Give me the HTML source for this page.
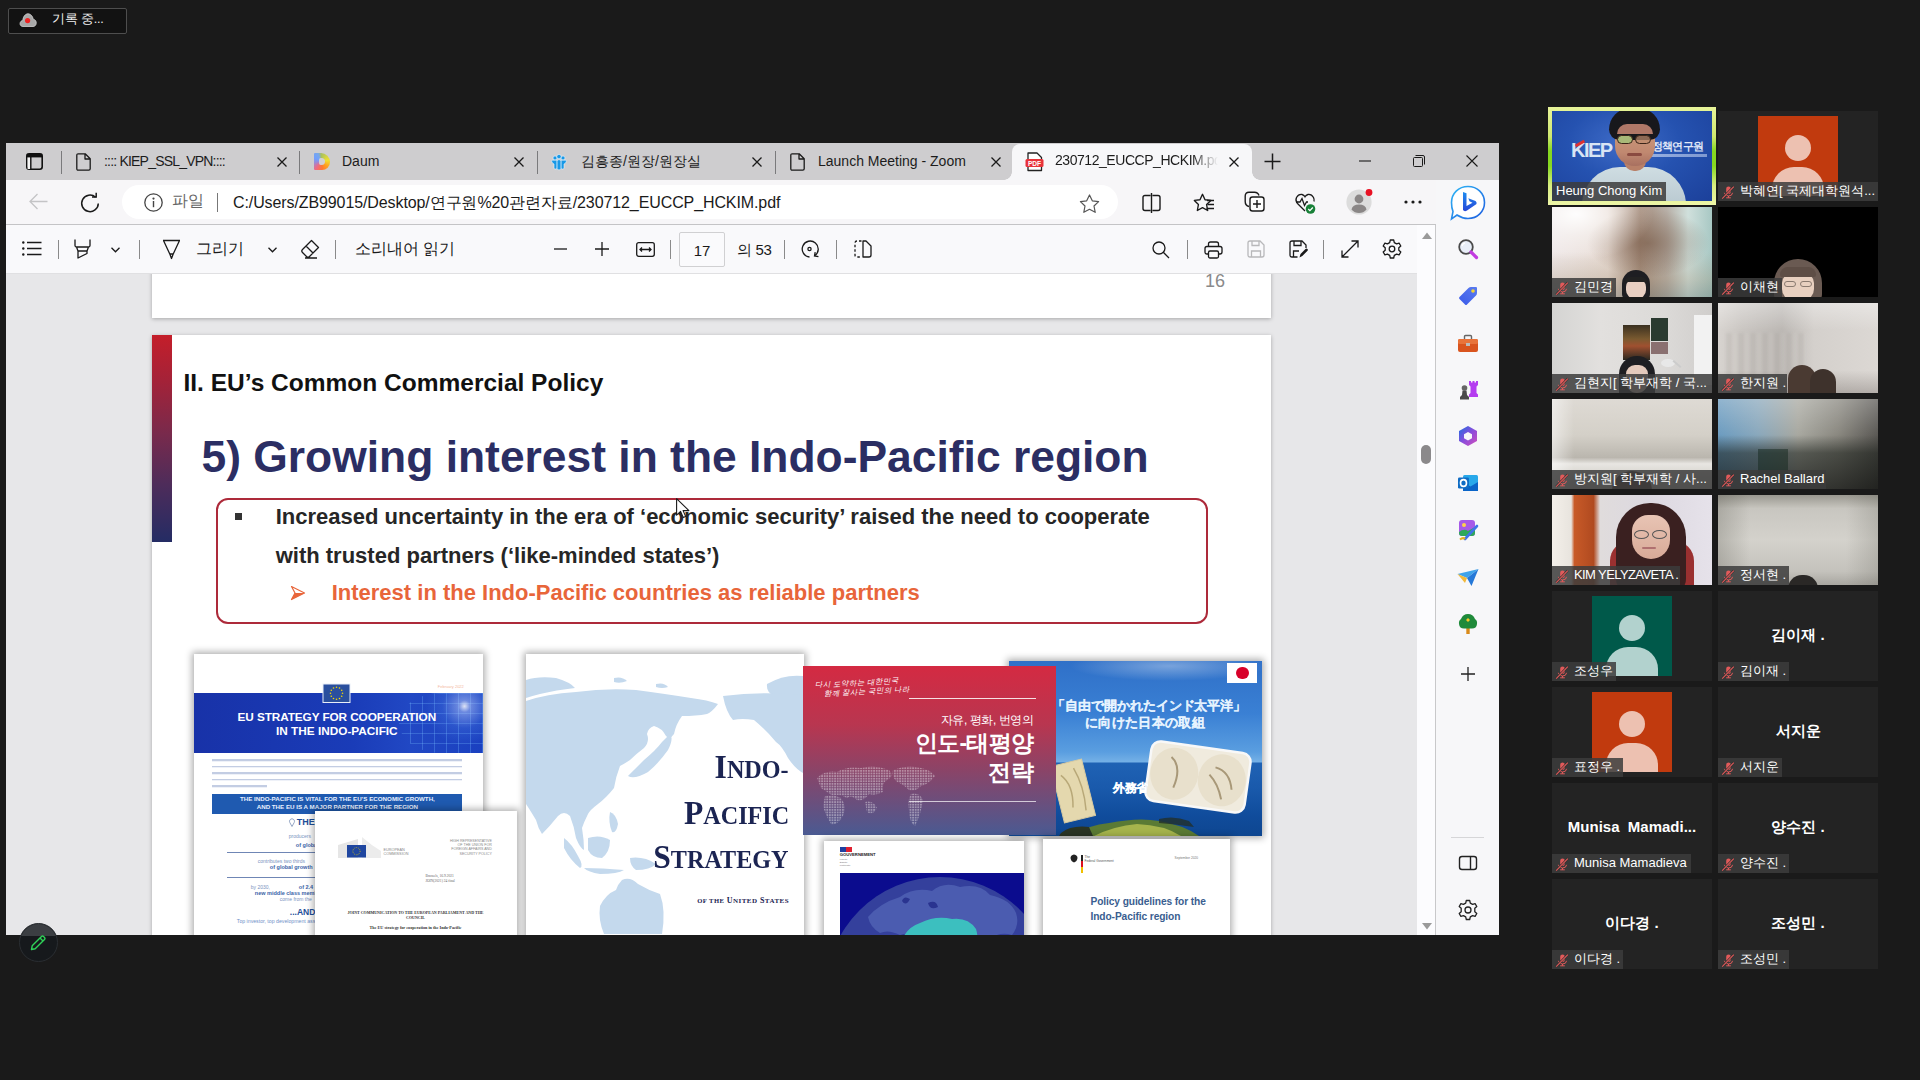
<!DOCTYPE html>
<html><head><meta charset="utf-8">
<style>
*{box-sizing:border-box;margin:0;padding:0}
html,body{width:1920px;height:1080px;overflow:hidden;background:#1a1a1a;font-family:"Liberation Sans",sans-serif}
.a{position:absolute}
.t{position:absolute;white-space:nowrap;line-height:1}
svg{position:absolute;overflow:visible}
/* browser */
#win{left:6px;top:143px;width:1493px;height:792px;background:#f7f7f9;overflow:hidden}
#tabs{left:0;top:0;width:1493px;height:37px;background:#cecdcf}
.sep{position:absolute;width:1px;background:#7a7a7c}
.sic{position:absolute;left:19.5px;width:24px;height:24px}
.tabtxt{font-size:14px;color:#1c1c1c;margin-top:-1px}
#addr{left:0;top:37px;width:1493px;height:45px;background:#f7f6f8;border-bottom:1.5px solid #c4c4c6}
#pill{left:116px;top:5px;width:996px;height:34px;background:#fff;border-radius:17px}
#pdftb{left:0;top:82px;width:1411px;height:49px;background:#f9f9fb;border-bottom:1px solid #e0e0e2}
#pdfarea{left:0;top:131px;width:1411px;height:661px;background:#e7e7e9;overflow:hidden}
#scroll{left:1411px;top:82px;width:19px;height:710px;background:#fcfcfe;border-right:1.5px solid #c8c8ca}
#side{left:1430px;top:37px;width:63px;height:755px;background:#f7f7f9}
.page{position:absolute;background:#fff;box-shadow:0 1px 3px rgba(0,0,0,.25)}
/* zoom panel */
.tile{position:absolute;width:160px;height:90px;background:#232323;overflow:hidden}
.lbl{position:absolute;left:0;bottom:0;height:19px;background:rgba(60,60,60,.85);color:#fff;font-size:13px;line-height:18px;white-space:nowrap;padding-left:22px;padding-right:4px}
.mic{position:absolute;left:3px;top:3px;width:14px;height:14px}
.cname{position:absolute;left:0;width:160px;top:34.5px;text-align:center;color:#fff;font-size:15px;font-weight:bold;line-height:18px}
</style></head><body>

<!-- recording badge -->
<div class="a" style="left:8px;top:8px;width:119px;height:26px;background:#121212;border:1px solid #4e4e4e;border-radius:2px"></div>
<svg style="left:19px;top:13px" width="18" height="14" viewBox="0 0 18 14"><path d="M4 13.5 C1 13.5 0.5 10.5 1.5 9 C2 8 3 7.6 3.8 7.6 C4 3.5 6.5 0.8 9 0.8 C11.5 0.8 13.8 3.2 14.2 6.2 C16.5 6.6 17.5 8.5 17.2 10.5 C17 12.5 15.5 13.5 14 13.5 Z" fill="#a8a8a8" stroke="#d0d0d0" stroke-width=".8"/><circle cx="8.6" cy="7.6" r="2.6" fill="#ee2222"/></svg>
<div class="t" style="left:52px;top:12.5px;font-size:12.5px;color:#f0f0f0;letter-spacing:-.2px">기록 중...</div>

<div id="win" class="a">
  
  <div id="tabs" class="a">
    <!-- sidebar toggle -->
    <svg style="left:20px;top:10px" width="17" height="17" viewBox="0 0 17 17"><rect x="0.8" y="0.8" width="15.4" height="15.4" rx="2.5" fill="none" stroke="#111" stroke-width="1.6"/><rect x="1.6" y="4" width="3.2" height="12" fill="#f4f4f4"/><rect x="0.8" y="0.8" width="15.4" height="3.6" fill="#111"/><line x1="4.8" y1="4" x2="4.8" y2="16" stroke="#111" stroke-width="1.4"/></svg>
    <div class="sep" style="left:55px;top:8px;height:23px"></div>
    <!-- tab1 -->
    <svg style="left:70px;top:10px" width="15" height="18" viewBox="0 0 15 18"><path d="M2.2 0.8 H9.2 L14.2 5.8 V15.8 Q14.2 17.2 12.8 17.2 H2.2 Q0.8 17.2 0.8 15.8 V2.2 Q0.8 0.8 2.2 0.8 Z M9 1 V6 H14" fill="none" stroke="#1a1a1a" stroke-width="1.3" stroke-linejoin="round"/></svg>
    <div class="t tabtxt" style="left:98px;top:12px;letter-spacing:-0.8px">:::: KIEP_SSL_VPN::::</div>
    <svg style="left:271px;top:14px" width="10" height="10" viewBox="0 0 10 10"><path d="M0.5 0.5 L9.5 9.5 M9.5 0.5 L0.5 9.5" stroke="#1a1a1a" stroke-width="1.3"/></svg>
    <div class="sep" style="left:293px;top:8px;height:23px"></div>
    <!-- tab2 daum -->
    <div class="a" style="left:307.5px;top:10px;width:16.5px;height:17px;border-radius:1px 9px 8px 1px;background:conic-gradient(from 0deg at 45% 50%,#a8c060 0deg,#f0e030 80deg,#ffa020 130deg,#ff7a30 170deg,#f06a80 215deg,#9a8ad8 260deg,#70a0ff 300deg,#7aa8e8 340deg,#a8c060 360deg);filter:blur(.3px)"><div class="a" style="left:5px;top:5px;width:6.5px;height:7px;border-radius:2px 4px 4px 2px;background:#d2d0d2"></div></div>
    <div class="t tabtxt" style="left:336px;top:12px">Daum</div>
    <svg style="left:508px;top:14px" width="10" height="10" viewBox="0 0 10 10"><path d="M0.5 0.5 L9.5 9.5 M9.5 0.5 L0.5 9.5" stroke="#1a1a1a" stroke-width="1.3"/></svg>
    <div class="sep" style="left:531px;top:8px;height:23px"></div>
    <!-- tab3 -->
    <svg style="left:544px;top:10px" width="18" height="18" viewBox="0 0 18 18"><g fill="#1898e6" stroke="#eaf4fb" stroke-width=".6"><circle cx="5" cy="5" r="2"/><circle cx="13" cy="5" r="2"/><path d="M1.5 8 Q1.5 7.2 2.5 7.2 H6.2 Q7 7.2 7 8 V15 Q7 16 6 16 H5 Q4 16 4 15 V11 Q2 10.5 1.5 8 Z"/><path d="M16.5 8 Q16.5 7.2 15.5 7.2 H11.8 Q11 7.2 11 8 V15 Q11 16 12 16 H13 Q14 16 14 15 V11 Q16 10.5 16.5 8 Z"/><circle cx="9" cy="3.6" r="2.2"/><rect x="7.1" y="6.8" width="3.8" height="10" rx="1.5"/></g></svg>
    <div class="t tabtxt" style="left:575px;top:12px">김흥종/원장/원장실</div>
    <svg style="left:746px;top:14px" width="10" height="10" viewBox="0 0 10 10"><path d="M0.5 0.5 L9.5 9.5 M9.5 0.5 L0.5 9.5" stroke="#1a1a1a" stroke-width="1.3"/></svg>
    <div class="sep" style="left:769px;top:8px;height:23px"></div>
    <!-- tab4 -->
    <svg style="left:784px;top:10px" width="15" height="18" viewBox="0 0 15 18"><path d="M2.2 0.8 H9.2 L14.2 5.8 V15.8 Q14.2 17.2 12.8 17.2 H2.2 Q0.8 17.2 0.8 15.8 V2.2 Q0.8 0.8 2.2 0.8 Z M9 1 V6 H14" fill="none" stroke="#1a1a1a" stroke-width="1.3" stroke-linejoin="round"/></svg>
    <div class="t tabtxt" style="left:812px;top:12px">Launch Meeting - Zoom</div>
    <svg style="left:985px;top:14px" width="10" height="10" viewBox="0 0 10 10"><path d="M0.5 0.5 L9.5 9.5 M9.5 0.5 L0.5 9.5" stroke="#1a1a1a" stroke-width="1.3"/></svg>
    <!-- active tab -->
    <div class="a" style="left:1006px;top:1px;width:240px;height:36px;background:#f7f7f9;border-radius:8px 8px 0 0"></div>
    <div class="a" style="left:998px;top:29px;width:8px;height:8px;background:radial-gradient(circle at 0 0,#cecdcf 7.5px,#f7f7f9 8px)"></div>
    <div class="a" style="left:1246px;top:29px;width:8px;height:8px;background:radial-gradient(circle at 100% 0,#cecdcf 7.5px,#f7f7f9 8px)"></div>
    <svg style="left:1019px;top:9px" width="19" height="20" viewBox="0 0 19 20"><path d="M3 1 H12 L16.5 5.5 V18.5 H3 Z" fill="#fff" stroke="#222" stroke-width="1.3" stroke-linejoin="round"/><rect x="0.5" y="7" width="18" height="8" rx="1.5" fill="#e8333a"/><text x="9.5" y="13.6" font-family="Liberation Sans" font-weight="bold" font-size="6.6" fill="#fff" text-anchor="middle">PDF</text></svg>
    <div class="t tabtxt" style="left:1049px;top:8px;height:20px;line-height:20px;width:163px;overflow:hidden;letter-spacing:-0.45px;-webkit-mask-image:linear-gradient(90deg,#000 84%,transparent)">230712_EUCCP_HCKIM.pdf</div>
    <svg style="left:1223px;top:14px" width="10" height="10" viewBox="0 0 10 10"><path d="M0.5 0.5 L9.5 9.5 M9.5 0.5 L0.5 9.5" stroke="#1a1a1a" stroke-width="1.3"/></svg>
    <svg style="left:1258px;top:10px" width="17" height="17" viewBox="0 0 17 17"><path d="M8.5 0.5 V16.5 M0.5 8.5 H16.5" stroke="#1a1a1a" stroke-width="1.5"/></svg>
    <!-- window controls -->
    <svg style="left:1353px;top:17px" width="12" height="2" viewBox="0 0 12 2"><line x1="0" y1="1" x2="12" y2="1" stroke="#1a1a1a" stroke-width="1.1"/></svg>
    <svg style="left:1407px;top:12px" width="12" height="12" viewBox="0 0 12 12"><rect x="0.5" y="2.5" width="9" height="9" rx="1" fill="none" stroke="#1a1a1a" stroke-width="1"/><path d="M2.5 0.5 H10 Q11.5 0.5 11.5 2 V9.5" fill="none" stroke="#1a1a1a" stroke-width="1"/></svg>
    <svg style="left:1460px;top:12px" width="12" height="12" viewBox="0 0 12 12"><path d="M0.5 0.5 L11.5 11.5 M11.5 0.5 L0.5 11.5" stroke="#1a1a1a" stroke-width="1.1"/></svg>
  </div>
  <div id="addr" class="a">
    <svg style="left:23px;top:13px" width="19" height="17" viewBox="0 0 19 17"><path d="M18.5 8.5 H1 M8.5 1 L1 8.5 L8.5 16" fill="none" stroke="#c4c4c6" stroke-width="1.3"/></svg>
    <svg style="left:73px;top:12px" width="22" height="22" viewBox="-1 -1 22 22"><path d="M18.3 10.5 A8.3 8.3 0 1 1 15.6 4.2" fill="none" stroke="#1a1a1a" stroke-width="1.5"/><path d="M12 4 L16.2 4 L16.2 -0.2" fill="none" stroke="#1a1a1a" stroke-width="1.5"/></svg>
    <div id="pill" class="a"></div>
    <svg style="left:138px;top:13px" width="19" height="19" viewBox="0 0 19 19"><circle cx="9.5" cy="9.5" r="8.7" fill="none" stroke="#444" stroke-width="1.3"/><circle cx="9.5" cy="5.6" r="1.1" fill="#444"/><rect x="8.8" y="8" width="1.4" height="6.2" fill="#444"/></svg>
    <div class="t" style="left:166px;top:13px;font-size:16px;color:#666">파일</div>
    <div class="a" style="left:211px;top:13px;width:1px;height:19px;background:#777"></div>
    <div class="t" style="left:227px;top:15px;font-size:16px;color:#1a1a1a;letter-spacing:-0.1px">C:/Users/ZB99015/Desktop/연구원%20관련자료/230712_EUCCP_HCKIM.pdf</div>
    <svg style="left:1073px;top:13.5px" width="21" height="20" viewBox="0 0 21 20"><path d="M10.5 1 L13.3 6.8 L19.6 7.6 L15 12 L16.2 18.3 L10.5 15.3 L4.8 18.3 L6 12 L1.4 7.6 L7.7 6.8 Z" fill="none" stroke="#555" stroke-width="1.2" stroke-linejoin="round"/></svg>
    <svg style="left:1136px;top:13px" width="19" height="20" viewBox="0 0 19 20"><path d="M8.5 2.5 H3 Q1 2.5 1 4.5 V15.5 Q1 17.5 3 17.5 H8.5 M10.5 2.5 H16 Q18 2.5 18 4.5 V15.5 Q18 17.5 16 17.5 H10.5 M9.5 0 V20" fill="none" stroke="#1a1a1a" stroke-width="1.4"/></svg>
    <svg style="left:1188px;top:12px" width="21" height="20" viewBox="0 0 21 20"><path d="M7.5 1.5 L9.6 6 L14.5 6.6 L10.9 10 L11.8 15 L7.5 12.6 L3.2 15 L4.1 10 L0.7 6.6 L5.4 6 Z" fill="none" stroke="#1a1a1a" stroke-width="1.15" stroke-linejoin="round" transform="translate(-0.5,0.5) scale(1.2)"/><path d="M13 8.5 H20 M13.5 12.5 H20 M12.5 16.5 H20" stroke="#1a1a1a" stroke-width="1.3"/></svg>
    <svg style="left:1238px;top:11px" width="21" height="21" viewBox="0 0 21 21"><path d="M5 15.5 Q1.2 14.5 1.2 10.5 V5 Q1.2 1.2 5 1.2 H10.5 Q14 1.2 15 4.5" fill="none" stroke="#1a1a1a" stroke-width="1.4"/><rect x="6" y="6" width="14" height="14" rx="2.5" fill="#fff" stroke="#1a1a1a" stroke-width="1.4"/><path d="M13 9 V17 M9 13 H17" stroke="#1a1a1a" stroke-width="1.4"/></svg>
    <svg style="left:1289px;top:12.5px" width="21" height="21" viewBox="0 0 21 21"><path d="M10 18 L2.5 10.5 Q0 7.5 1.5 4.5 Q3.5 1 7 1.5 Q9 2 10 3.8 Q11 2 13 1.5 Q16.5 1 18.5 4.5 Q19.5 6.5 19 8.5" fill="none" stroke="#1a1a1a" stroke-width="1.3"/><path d="M1 9 H5 L7 5.5 L9.5 12.5 L11.5 9 H13" fill="none" stroke="#1a1a1a" stroke-width="1.3"/><circle cx="15.5" cy="16" r="4.8" fill="#188038"/><path d="M13.3 16 L14.9 17.6 L17.8 14.5" fill="none" stroke="#fff" stroke-width="1.3"/></svg>
        <svg style="left:1340px;top:9px" width="26" height="26" viewBox="0 0 26 26"><circle cx="13" cy="13" r="12.6" fill="#dcdcdc"/><circle cx="13" cy="10" r="4.4" fill="#8a8686"/><path d="M5.5 20.5 Q6.5 15.5 13 15.5 Q19.5 15.5 20.5 20.5 Q17.5 24 13 24 Q8.5 24 5.5 20.5 Z" fill="#8a8686"/><circle cx="23" cy="3.5" r="3.4" fill="#e81123"/></svg>
    <svg style="left:1398px;top:20px" width="18" height="4" viewBox="0 0 18 4"><circle cx="2" cy="2" r="1.6" fill="#1a1a1a"/><circle cx="9" cy="2" r="1.6" fill="#1a1a1a"/><circle cx="16" cy="2" r="1.6" fill="#1a1a1a"/></svg>
  </div>
  <div id="pdftb" class="a">
    <svg style="left:16px;top:16px" width="20" height="15" viewBox="0 0 20 15"><circle cx="1.3" cy="1.5" r="1.2" fill="#1a1a1a"/><circle cx="1.3" cy="7.5" r="1.2" fill="#1a1a1a"/><circle cx="1.3" cy="13.5" r="1.2" fill="#1a1a1a"/><path d="M5 1.5 H19.5 M5 7.5 H19.5 M5 13.5 H19.5" stroke="#1a1a1a" stroke-width="1.3" fill="none"/></svg>
    <div class="a" style="left:52px;top:15px;width:1px;height:19px;background:#8a8a8a"></div>
    <svg style="left:68px;top:14px" width="17" height="20" viewBox="0 0 17 20"><path d="M1 0.5 V6.5 Q1 8 2.5 8 H14.5 Q16 8 16 6.5 V0.5 M2.5 8 L4 12 L4 19 L13 14.5 V12 L14.5 8 M4 12 H13" stroke="#1a1a1a" stroke-width="1.3" fill="none" stroke-linejoin="round"/></svg>
    <svg style="left:105px;top:22px" width="9" height="6" viewBox="0 0 9 6"><path d="M0.5 0.8 L4.5 4.8 L8.5 0.8" stroke="#1a1a1a" stroke-width="1.3" fill="none"/></svg>
    <div class="a" style="left:133px;top:15px;width:1px;height:19px;background:#8a8a8a"></div>
    <svg style="left:156px;top:14px" width="19" height="20" viewBox="0 0 19 20"><path d="M1 1.5 H18 M1.5 1.5 L8 15.5 L9.5 19.5 L11 15.5 L17.5 1.5 M7.5 15 H11.5" stroke="#1a1a1a" stroke-width="1.3" fill="none" stroke-linejoin="round"/></svg>
    <div class="t" style="left:190px;top:16px;font-size:16px;color:#1a1a1a">그리기</div>
    <svg style="left:262px;top:22px" width="9" height="6" viewBox="0 0 9 6"><path d="M0.5 0.8 L4.5 4.8 L8.5 0.8" stroke="#1a1a1a" stroke-width="1.3" fill="none"/></svg>
    <svg style="left:294px;top:14px" width="20" height="20" viewBox="0 0 20 20"><path d="M11.5 1.5 L18.5 8.5 L9.5 17.5 Q8 19 6.5 17.5 L2.5 13.5 Q1 12 2.5 10.5 Z M6 7 L13 14 M5 19 H17" stroke="#1a1a1a" stroke-width="1.3" fill="none" stroke-linejoin="round"/></svg>
    <div class="a" style="left:329px;top:15px;width:1px;height:19px;background:#8a8a8a"></div>
    <div class="t" style="left:349px;top:16px;font-size:16px;color:#1a1a1a;letter-spacing:0px">소리내어 읽기</div>
    <svg style="left:548px;top:23px" width="13" height="2" viewBox="0 0 13 2"><path d="M0 1 H13" stroke="#1a1a1a" stroke-width="1.3" fill="none"/></svg>
    <svg style="left:589px;top:17px" width="14" height="14" viewBox="0 0 14 14"><path d="M7 0 V14 M0 7 H14" stroke="#1a1a1a" stroke-width="1.3" fill="none"/></svg>
    <svg style="left:630px;top:17px" width="19" height="15" viewBox="0 0 19 15"><rect x="0.7" y="0.7" width="17.6" height="13.6" rx="2" stroke="#1a1a1a" stroke-width="1.3" fill="none"/><path d="M4 7.5 H15 M6 5.5 L4 7.5 L6 9.5 M13 5.5 L15 7.5 L13 9.5" stroke="#1a1a1a" stroke-width="1.3" fill="none"/></svg>
    <div class="a" style="left:664px;top:15px;width:1px;height:19px;background:#8a8a8a"></div>
    <div class="a" style="left:673px;top:7px;width:46px;height:35px;border:1px solid #d0d0d2;border-radius:2px;background:#fafafc"></div>
    <div class="t" style="left:673px;top:17.5px;width:46px;text-align:center;font-size:15px;color:#1a1a1a">17</div>
    <div class="t" style="left:731px;top:17px;font-size:15px;color:#1a1a1a;letter-spacing:-.3px">의 53</div>
    <div class="a" style="left:778px;top:15px;width:1px;height:19px;background:#8a8a8a"></div>
    <svg style="left:794px;top:14px" width="20" height="21" viewBox="0 0 20 21"><path d="M14.5 16.8 A8 8 0 1 0 9.5 18" stroke="#1a1a1a" stroke-width="1.3" fill="none"/><path d="M14.5 13 V17 H18.5" stroke="#1a1a1a" stroke-width="1.3" fill="none" transform="rotate(10 14.5 17)"/><circle cx="9.5" cy="10" r="1.6" stroke="#1a1a1a" stroke-width="1.3" fill="none"/></svg>
    <div class="a" style="left:830px;top:15px;width:1px;height:19px;background:#8a8a8a"></div>
    <svg style="left:848px;top:15px" width="18" height="18" viewBox="0 0 18 18"><path d="M7.5 1 H3 Q1 1 1 3 V15 Q1 17 3 17 H7.5" stroke="#1a1a1a" stroke-width="1.3" fill="none" stroke-dasharray="2.5 2"/><path d="M9 1 V17 H15 Q17 17 17 15 V6 L12 1 Z" stroke="#1a1a1a" stroke-width="1.3" fill="none" stroke-linejoin="round"/></svg>
    <svg style="left:1146px;top:16px" width="18" height="18" viewBox="0 0 18 18"><circle cx="7" cy="7" r="6" stroke="#1a1a1a" stroke-width="1.3" fill="none"/><path d="M11.3 11.3 L17 17" stroke="#1a1a1a" stroke-width="1.3" fill="none"/></svg>
    <div class="a" style="left:1181px;top:15px;width:1px;height:19px;background:#8a8a8a"></div>
    <svg style="left:1198px;top:15.5px" width="19" height="18" viewBox="0 0 19 18"><path d="M4.5 5.5 V3 Q4.5 1 6.5 1 H12.5 Q14.5 1 14.5 3 V5.5 M4.5 13 H3 Q1 13 1 11 V7.5 Q1 5.5 3 5.5 H16 Q18 5.5 18 7.5 V11 Q18 13 16 13 H14.5" stroke="#1a1a1a" stroke-width="1.3" fill="none"/><rect x="4.5" y="10" width="10" height="7" rx="1.5" stroke="#1a1a1a" stroke-width="1.3" fill="none"/></svg>
    <svg style="left:1241px;top:15px" width="18" height="18" viewBox="0 0 18 18"><path d="M3 1 H13 L17 5 V15 Q17 17 15 17 H3 Q1 17 1 15 V3 Q1 1 3 1 Z M5 1 V5.5 H12 V1 M4.5 17 V11 H13.5 V17" fill="none" stroke="#b8b8ba" stroke-width="1.3"/></svg>
    <svg style="left:1283px;top:15px" width="19" height="19" viewBox="0 0 19 19"><path d="M8.5 17 H3 Q1 17 1 15 V3 Q1 1 3 1 H13 L17 5 V8 M5 1 V5.5 H12 V1 M4.5 17 V11 H10" stroke="#1a1a1a" stroke-width="1.3" fill="none"/><path d="M10.5 17.5 L11.5 14 L16.5 9 Q17.5 8 18.5 9 Q19.3 10 18.3 11 L13.3 16 Z" fill="#1a1a1a"/></svg>
    <div class="a" style="left:1317px;top:15px;width:1px;height:19px;background:#8a8a8a"></div>
    <svg style="left:1335px;top:15px" width="18" height="18" viewBox="0 0 18 18"><path d="M1 17 L17 1 M1 10.5 V17 H7.5 M10.5 1 H17 V7.5" stroke="#1a1a1a" stroke-width="1.3" fill="none"/></svg>
    <svg style="left:1376px;top:14px" width="20" height="20" viewBox="0 0 20 20"><path d="M8.3 1 H11.7 L12.3 3.6 L14.6 4.9 L17.1 4.1 L18.8 7 L16.8 8.8 V11.2 L18.8 13 L17.1 15.9 L14.6 15.1 L12.3 16.4 L11.7 19 H8.3 L7.7 16.4 L5.4 15.1 L2.9 15.9 L1.2 13 L3.2 11.2 V8.8 L1.2 7 L2.9 4.1 L5.4 4.9 L7.7 3.6 Z" stroke="#1a1a1a" stroke-width="1.3" fill="none" stroke-linejoin="round"/><circle cx="10" cy="10" r="2.8" stroke="#1a1a1a" stroke-width="1.3" fill="none"/></svg>
  </div>
  <div id="pdfarea" class="a">
    <div class="page" style="left:146px;top:-200px;width:1119px;height:244px;box-shadow:0 1px 4px rgba(0,0,0,.28)">
      <div class="t" style="left:1053px;top:198px;font-size:18px;color:#8a8a8a">16</div>
    </div>
    <div class="page" id="p17" style="left:146px;top:61px;width:1119px;height:800px;box-shadow:0 1px 4px rgba(0,0,0,.28);overflow:hidden">
      <div class="a" style="left:0;top:0;width:20px;height:207px;background:linear-gradient(180deg,#c41e2a 0%,#a42238 22%,#782a4c 48%,#4e2c5a 72%,#242c64 100%)"></div>
      <div class="t" style="left:31.5px;top:35.8px;font-size:24.5px;font-weight:bold;color:#111">II. EU’s Common Commercial Policy</div>
      <div class="t" style="left:49.5px;top:99.9px;font-size:44.4px;font-weight:bold;color:#2b2e63">5) Growing interest in the Indo-Pacific region</div>
      <div class="a" style="left:64.3px;top:163.4px;width:992px;height:125.3px;border:2px solid #ad2a3a;border-radius:12px"></div>
      <div class="a" style="left:83.4px;top:177.7px;width:6.2px;height:7.5px;background:#333"></div>
      <div class="t" style="left:123.7px;top:171.3px;font-size:22px;font-weight:bold;color:#262626">Increased uncertainty in the era of ‘economic security’ raised the need to cooperate</div>
      <div class="t" style="left:123.7px;top:210px;font-size:22px;font-weight:bold;color:#262626">with trusted partners (‘like-minded states’)</div>
      <svg style="left:139px;top:251px" width="14" height="14" viewBox="0 0 14 14"><path d="M0.5 0.5 L13.5 7 L0.5 13.5 L4 7 Z" fill="none" stroke="#e8653a" stroke-width="1.2" stroke-linejoin="round"/><path d="M4 7 L13.5 7 L0.5 13.5 Z" fill="#e8653a"/></svg>
      <div class="t" style="left:179.7px;top:246.6px;font-size:22px;font-weight:bold;color:#e8653a">Interest in the Indo-Pacific countries as reliable partners</div>
      
      <!-- EU doc1 -->
      <div class="a" style="left:41.8px;top:318.8px;width:289px;height:300px;background:#fff;box-shadow:0 0 7px 2px rgba(0,0,0,.32)">
        <div class="a" style="left:0;top:39px;width:289px;height:60px;background:linear-gradient(90deg,#1832a8 0%,#1a3cb8 55%,#2148c4 75%,#1a40c0 100%)"></div>
        <div class="a" style="left:205px;top:39px;width:84px;height:60px;background:radial-gradient(circle at 78% 22%,rgba(255,255,255,.85) 0,rgba(190,210,255,.5) 6px,rgba(90,140,235,.25) 22px,transparent 40px),repeating-linear-gradient(90deg,transparent 0 11px,rgba(120,190,255,.3) 11px 12px),repeating-linear-gradient(0deg,transparent 0 9px,rgba(120,190,255,.28) 9px 10px);border-radius:50% 0 0 50%"></div>
        <svg style="left:129.5px;top:30.5px" width="27" height="18.5" viewBox="0 0 27 18.5"><rect x="0" y="0" width="27" height="18.5" fill="#2a4f9e" stroke="#e8eef8" stroke-width="1"/><circle cx="19.50" cy="9.25" r="0.8" fill="#f5d800"/><circle cx="18.70" cy="12.25" r="0.8" fill="#f5d800"/><circle cx="16.50" cy="14.45" r="0.8" fill="#f5d800"/><circle cx="13.50" cy="15.25" r="0.8" fill="#f5d800"/><circle cx="10.50" cy="14.45" r="0.8" fill="#f5d800"/><circle cx="8.30" cy="12.25" r="0.8" fill="#f5d800"/><circle cx="7.50" cy="9.25" r="0.8" fill="#f5d800"/><circle cx="8.30" cy="6.25" r="0.8" fill="#f5d800"/><circle cx="10.50" cy="4.05" r="0.8" fill="#f5d800"/><circle cx="13.50" cy="3.25" r="0.8" fill="#f5d800"/><circle cx="16.50" cy="4.05" r="0.8" fill="#f5d800"/><circle cx="18.70" cy="6.25" r="0.8" fill="#f5d800"/></svg>
        <div class="t" style="left:244px;top:31px;font-size:4px;color:#f4b8a0">February 2022</div>
        <div class="t" style="left:0;width:286px;text-align:center;top:58.5px;font-size:11.8px;font-weight:bold;color:#fff;letter-spacing:-0.1px">EU STRATEGY FOR COOPERATION</div>
        <div class="t" style="left:0;width:286px;text-align:center;top:72.5px;font-size:11.8px;font-weight:bold;color:#fff">IN THE INDO-PACIFIC</div>
        <div class="a" style="left:18px;top:105px;width:250px;height:30px;background:repeating-linear-gradient(180deg,#c3cde3 0 1.6px,#eef1f8 1.6px 2.6px,transparent 2.6px 6.6px)"></div>
        <div class="a" style="left:73px;top:131px;width:200px;height:4px;background:#fff"></div>
        <div class="a" style="left:18.6px;top:140.4px;width:250px;height:19.6px;background:#1f5ab0"></div>
        <div class="t" style="left:18.6px;width:250px;text-align:center;top:142.5px;font-size:6.2px;font-weight:bold;color:#e8f0ff">THE INDO-PACIFIC IS VITAL FOR THE EU’S ECONOMIC GROWTH,</div>
        <div class="t" style="left:18.6px;width:250px;text-align:center;top:150.3px;font-size:6.2px;font-weight:bold;color:#e8f0ff">AND THE EU IS A MAJOR PARTNER FOR THE REGION</div>
        <svg style="left:95px;top:164px" width="6" height="9" viewBox="0 0 6 9"><path d="M3 8.5 L0.8 4.5 A2.5 2.5 0 1 1 5.2 4.5 Z" fill="none" stroke="#7a8fb5" stroke-width=".8"/></svg>
        <div class="t" style="left:103px;top:164px;font-size:9px;font-weight:bold;color:#1f4f9a">THE</div>
        <div class="t" style="left:95px;top:180px;font-size:5px;color:#7a93c0">producers</div>
        <div class="t" style="left:102px;top:189px;font-size:5.5px;font-weight:bold;color:#3b63a8">of global</div>
        <div class="a" style="left:33.6px;top:198px;width:100px;height:1.2px;background:#6f86b5"></div>
        <div class="t" style="left:64px;top:205px;font-size:5px;color:#7a93c0">contributes two thirds</div>
        <div class="t" style="left:76px;top:211px;font-size:5.5px;font-weight:bold;color:#3b63a8">of global growth</div>
        <div class="a" style="left:33.6px;top:223px;width:100px;height:1.2px;background:#6f86b5"></div>
        <div class="t" style="left:57px;top:231px;font-size:5px;color:#7a93c0">by 2030,</div>
        <div class="t" style="left:105px;top:231px;font-size:5.5px;font-weight:bold;color:#3b63a8">of 2.4</div>
        <div class="t" style="left:61px;top:237px;font-size:5.5px;font-weight:bold;color:#3b63a8">new middle class members</div>
        <div class="t" style="left:86px;top:243px;font-size:5px;color:#7a93c0">come from the</div>
        <div class="t" style="left:96px;top:254px;font-size:8.5px;font-weight:bold;color:#1f4f9a">...AND T</div>
        <div class="t" style="left:43px;top:265px;font-size:5.2px;color:#6f8fc8">Top investor, top development assistance</div>
      </div>
      <!-- EU doc2 -->
      <div class="a" style="left:162.5px;top:475.6px;width:202.3px;height:140px;background:#fff;box-shadow:0 0 7px 2px rgba(0,0,0,.32)">
        <svg style="left:23px;top:26px" width="44" height="22" viewBox="0 0 44 22"><path d="M0 8 L20 2 L20 21 L0 21 Z" fill="#e6e6e6"/><path d="M24 0 L24 21 L43 21 L43 14 Q33 8 24 0 Z" fill="#ececec"/><rect x="9" y="8" width="19" height="12.5" fill="#1f46a0"/><circle cx="18.5" cy="14.2" r="3.6" fill="none" stroke="#e8d000" stroke-width=".8" stroke-dasharray=".8 1"/></svg>
        <div class="t" style="left:69px;top:37px;font-size:3.8px;line-height:4.6px;color:#888">EUROPEAN<br>COMMISSION</div>
        <div class="t" style="left:130px;top:28px;width:47.3px;text-align:right;font-size:3.6px;line-height:4.4px;color:#888;white-space:normal">HIGH REPRESENTATIVE OF THE UNION FOR FOREIGN AFFAIRS AND SECURITY POLICY</div>
        <div class="t" style="left:111px;top:63px;font-size:3.6px;line-height:5px;color:#666;font-family:'Liberation Serif'">Brussels, 16.9.2021<br>JOIN(2021) 24 final</div>
        <div class="t" style="left:30px;top:99px;width:142px;text-align:center;font-size:4px;line-height:5px;font-weight:bold;color:#333;font-family:'Liberation Serif';white-space:normal">JOINT COMMUNICATION TO THE EUROPEAN PARLIAMENT AND THE COUNCIL</div>
        <div class="t" style="left:30px;top:115px;width:142px;text-align:center;font-size:4.2px;font-weight:bold;color:#333;font-family:'Liberation Serif'">The EU strategy for cooperation in the Indo-Pacific</div>
      </div>
      <!-- US doc -->
      <div class="a" style="left:373.5px;top:318.9px;width:278.5px;height:300px;background:#fff;box-shadow:0 0 7px 2px rgba(0,0,0,.32);overflow:hidden">
        <svg style="left:0;top:0" width="279" height="300" viewBox="0 0 279 300">
          <g fill="#c4d9ed">
            <path d="M0 26 Q12 22 30 24 Q44 28 49 34 Q30 36 14 40 Q6 42 0 44 Z"/>
            <path d="M88 24 Q96 22 101 27 Q94 30 88 28 Z"/>
            <path d="M130 30 Q138 28 142 33 Q136 35 130 33 Z"/>
            <path d="M241 30 Q258 20 277 22 L279 47 Q262 46 248 42 Q240 38 241 30 Z"/>
            <path d="M0 47 Q20 40 50 38 Q80 34 110 36 Q140 40 165 44 Q182 46 192 50 Q186 58 181 60 Q170 62 156 62 Q150 70 148 80 Q144 86 140 82 Q136 74 128 72 Q122 74 121 80 Q124 88 118 94 Q110 100 104 106 Q98 110 94 112 Q90 122 88 134 Q80 144 72 150 Q64 156 62 160 Q58 168 56 174 Q58 186 58 196 Q54 194 50 184 Q48 172 44 162 Q38 156 32 162 Q24 172 16 180 Q12 174 10 166 Q4 156 0 150 Z"/>
            <path d="M144 80 Q148 84 142 96 Q132 110 122 118 Q108 126 102 122 Q110 114 118 106 Q130 96 136 88 Z"/>
            <path d="M84 158 Q90 160 92 170 Q90 180 86 178 Q82 168 84 158 Z"/>
            <path d="M62 184 Q74 180 84 186 Q84 198 76 204 Q66 204 62 196 Z"/>
            <path d="M38 184 Q46 190 52 202 Q58 212 54 214 Q44 206 38 194 Z"/>
            <path d="M58 214 Q76 214 98 216 Q92 220 74 220 Q62 218 58 214 Z"/>
            <path d="M104 204 Q118 202 130 210 Q124 216 110 216 Q104 212 104 204 Z"/>
            <path d="M96 226 Q104 222 112 230 Q122 236 134 240 Q140 256 136 280 L78 280 Q72 266 74 252 Q80 240 90 236 Q92 230 96 226 Z"/>
            <path d="M197 42 Q230 38 262 40 Q276 40 279 42 L279 120 Q270 116 262 104 Q256 92 250 88 Q240 76 228 66 Q216 64 207 66 Q200 58 197 42 Z"/>
          </g>
        </svg>
        <div class="t" style="right:15px;top:96.5px;font-size:34px;font-weight:bold;color:#1b2452;font-family:'Liberation Serif';letter-spacing:0;transform:scaleX(.93);transform-origin:100% 50%">I<span style="font-size:26px">NDO-</span></div>
        <div class="t" style="right:15px;top:142.3px;font-size:34px;font-weight:bold;color:#1b2452;font-family:'Liberation Serif';letter-spacing:0;transform:scaleX(.93);transform-origin:100% 50%">P<span style="font-size:26px">ACIFIC</span></div>
        <div class="t" style="right:15px;top:186.6px;font-size:34px;font-weight:bold;color:#1b2452;font-family:'Liberation Serif';letter-spacing:0;transform:scaleX(.93);transform-origin:100% 50%">S<span style="font-size:26px">TRATEGY</span></div>
        <div class="t" style="right:15px;top:243px;font-size:8px;font-weight:bold;color:#1b2452;font-family:'Liberation Serif';letter-spacing:.45px;transform:scaleX(1);transform-origin:100% 50%"><span style="font-size:6.6px">OF THE</span> U<span style="font-size:7px">NITED</span> S<span style="font-size:7px">TATES</span></div>
      </div>
      <!-- Japan doc -->
      <div class="a" style="left:857px;top:326.3px;width:253px;height:174.4px;box-shadow:0 0 7px 2px rgba(0,0,0,.32);overflow:hidden;background:linear-gradient(180deg,#2f70c8 0%,#3a80d4 30%,#5a9ee0 52%,#74b0e6 57.5%,#1f62b4 58.5%,#1a5aac 72%,#104c9c 88%,#0e4690 100%)">
        <div class="a" style="left:60px;top:-10px;width:200px;height:30px;border-radius:50%;background:radial-gradient(ellipse,rgba(255,255,255,.35),transparent 70%)"></div>
        <svg style="left:0;top:0" width="253" height="175" viewBox="0 0 253 175">
          <path d="M60 175 Q80 164 100 162 Q130 156 150 160 Q175 164 190 175 Z" fill="#5a7a34"/>
          <path d="M85 175 Q105 165 128 163 Q155 164 172 175 Z" fill="#a6b44c"/>
          <path d="M52 172 Q62 164 80 166 L84 175 L50 175 Z" fill="#2a3424"/>
          <path d="M150 158 Q165 154 180 160 L185 166 Q165 163 150 162 Z" fill="#22302a" opacity=".8"/>
          <g transform="rotate(8 189 116)"><rect x="139" y="86" width="100" height="60" rx="9" fill="#f0ebde" stroke="#f8f8f8" stroke-width="2.5"/><ellipse cx="165" cy="116" rx="24" ry="26" fill="#e8e0cc"/><ellipse cx="213" cy="116" rx="24" ry="26" fill="#e8e0cc"/><path d="M160 100 Q172 108 166 130 M205 104 Q220 106 224 124 M200 112 Q210 120 215 135" stroke="#a89878" stroke-width="2" fill="none"/></g>
          <g transform="rotate(-14 64 130)"><rect x="48" y="101" width="32" height="58" fill="#e4d8ae" stroke="#d8caa0" stroke-width="1"/><path d="M56 112 Q66 124 60 146 M70 108 Q76 128 72 152" stroke="#b8a878" stroke-width="1.5" fill="none"/></g>
        </svg>
        <div class="a" style="left:218px;top:2px;width:30px;height:19.5px;background:#fff"></div>
        <div class="a" style="left:227px;top:5.5px;width:12.5px;height:12.5px;border-radius:50%;background:#d8002a"></div>
        <div class="t" style="left:43px;top:39px;width:190px;text-align:center;font-size:12.6px;font-weight:bold;color:#a8cdf0;letter-spacing:-.05px;-webkit-text-stroke:.3px #e8f4ff">「自由で開かれたインド太平洋」</div>
        <div class="t" style="left:76px;top:56px;width:120px;text-align:center;font-size:12.6px;font-weight:bold;color:#a8cdf0;letter-spacing:.3px;-webkit-text-stroke:.3px #e8f4ff">に向けた日本の取組</div>
        <div class="t" style="left:104px;top:121px;font-size:12px;font-weight:bold;color:#8cc0f0;letter-spacing:-.5px;-webkit-text-stroke:.4px #fff">外務省</div>
      </div>
      <!-- Korean doc -->
      <div class="a" style="left:651px;top:331.3px;width:252.7px;height:168.5px;overflow:hidden;background:linear-gradient(180deg,#d42a42 0%,#b83650 35%,#8a4468 62%,#4a5a92 100%)">
        <svg style="left:0;top:0" width="253" height="169" viewBox="0 0 253 169"><defs><pattern id="dots" width="2.6" height="2.6" patternUnits="userSpaceOnUse"><rect width="1.8" height="1.8" fill="rgba(255,255,255,.38)"/></pattern></defs><g fill="url(#dots)">
<path d="M14 112 Q22 104 34 106 Q44 100 58 102 Q72 98 86 104 Q92 110 84 114 Q78 118 80 126 Q72 130 66 128 Q60 136 54 134 Q48 128 44 132 Q38 128 30 130 Q24 126 18 122 Z"/>
<path d="M22 130 Q30 128 38 132 Q44 140 40 150 Q34 160 28 158 Q22 148 20 140 Z"/>
<path d="M62 136 Q70 134 74 142 Q70 150 64 146 Z"/>
<path d="M90 104 Q104 98 118 102 Q128 104 132 110 Q126 118 118 120 Q112 126 106 124 Q100 118 94 116 Q88 110 90 104 Z"/>
<path d="M108 128 Q116 126 120 134 Q118 148 112 160 Q106 156 106 144 Q104 134 108 128 Z"/>
</g></svg>
        <div class="t" style="left:12px;top:12px;font-size:7.5px;color:#fff;transform:rotate(-3deg);font-style:italic;line-height:9px">다시 도약하는 대한민국<br>&nbsp;&nbsp;&nbsp;&nbsp;함께 잘사는 국민의 나라</div>
        <div class="a" style="left:105.5px;top:32px;width:127px;height:1.2px;background:rgba(255,255,255,.85)"></div>
        <div class="t" style="right:22px;top:48px;font-size:12px;color:#fff;letter-spacing:-.4px">자유, 평화, 번영의</div>
        <div class="t" style="right:22px;top:66px;font-size:23px;font-weight:bold;color:#fff;letter-spacing:-.6px">인도-태평양</div>
        <div class="t" style="right:22px;top:95px;font-size:23px;font-weight:bold;color:#fff">전략</div>
        <div class="a" style="left:105.5px;top:134.5px;width:127px;height:1.2px;background:rgba(255,255,255,.7)"></div>
      </div>
      <!-- French doc -->
      <div class="a" style="left:671.75px;top:506.25px;width:200.25px;height:110px;background:#fff;box-shadow:0 0 7px 2px rgba(0,0,0,.32);overflow:hidden">
        <div class="a" style="left:16px;top:5.5px;width:6px;height:5px;background:#2040a0"></div>
        <div class="a" style="left:22px;top:5.5px;width:6px;height:5px;background:#e02030"></div>
        <div class="t" style="left:16px;top:12px;font-size:4.2px;font-weight:bold;color:#222">GOUVERNEMENT</div>
        <div class="t" style="left:16px;top:17px;font-size:2.5px;line-height:3px;color:#777">Liberté<br>Égalité<br>Fraternité</div>
        <div class="a" style="left:16px;top:31.5px;width:185px;height:80px;background:#0b0c8e;overflow:hidden">
          <svg style="left:0;top:0" width="185" height="80" viewBox="0 0 185 80"><circle cx="100" cy="118" r="114" fill="#34409c"/>
          <path d="M28 44 Q40 30 60 24 Q74 14 92 18 Q104 8 120 14 Q140 10 150 22 Q170 26 176 40 Q180 52 172 62 Q160 58 150 66 Q140 62 126 70 Q118 64 104 70 Q96 62 84 66 Q70 58 60 62 Q48 56 40 60 Q30 54 28 44 Z" fill="#4b5cb0"/>
          <path d="M58 80 Q62 56 80 50 Q96 42 112 46 Q128 44 136 56 Q140 68 132 80 Z" fill="#3cbfbf"/>
          <path d="M62 28 Q64 22 70 26 Q66 34 62 28 Z M88 30 Q96 26 98 34 Q90 38 88 30 Z" fill="#2a3490"/></svg>
        </div>
      </div>
      <!-- German doc -->
      <div class="a" style="left:890.5px;top:503.75px;width:187.5px;height:110px;background:#fff;box-shadow:0 0 7px 2px rgba(0,0,0,.32);overflow:hidden">
        <svg style="left:27px;top:15px" width="8" height="9" viewBox="0 0 8 9"><path d="M4 0.5 Q7.5 1 7.5 4 Q7 7.5 4 8.5 Q1 7.5 0.5 4 Q0.5 1 4 0.5 Z" fill="#222"/></svg>
        <div class="a" style="left:38.5px;top:16px;width:1.5px;height:6px;background:#222"></div>
        <div class="a" style="left:38.5px;top:22px;width:1.5px;height:6px;background:#dd1020"></div>
        <div class="a" style="left:38.5px;top:28px;width:1.5px;height:6px;background:#f0c000"></div>
        <div class="t" style="left:42px;top:16px;font-size:3.2px;line-height:4px;color:#555">The<br>Federal Government</div>
        <div class="t" style="left:132px;top:18px;font-size:3.2px;color:#777">September 2020</div>
        <div class="t" style="left:48px;top:58.5px;font-size:10.2px;font-weight:bold;color:#3a5e90;letter-spacing:-.1px">Policy guidelines for the</div>
        <div class="t" style="left:48px;top:73.5px;font-size:10.2px;font-weight:bold;color:#3a5e90;letter-spacing:-.1px">Indo-Pacific region</div>
      </div>
    </div>
  </div>
  <div id="scroll" class="a">
    <svg style="left:4.5px;top:7px" width="10" height="7" viewBox="0 0 10 7"><path d="M0 7 L5 0.5 L10 7 Z" fill="#9a9a9a"/></svg>
    <div class="a" style="left:4px;top:219.7px;width:10px;height:19px;border-radius:5px;background:#8b898b"></div>
    <svg style="left:4.5px;top:698px" width="10" height="7" viewBox="0 0 10 7"><path d="M0 0 L5 6.5 L10 0 Z" fill="#9a9a9a"/></svg>
  </div>
  <div id="side" class="a">
    <svg style="left:13.5px;top:5px" width="36" height="36" viewBox="0 0 36 36"><defs><linearGradient id="bg1" x1="0" y1="0" x2="1" y2="1"><stop offset="0" stop-color="#2fb6f5"/><stop offset="1" stop-color="#1f5fe0"/></linearGradient><linearGradient id="bg2" x1="0" y1="0" x2="0" y2="1"><stop offset="0" stop-color="#1d8cf0"/><stop offset="1" stop-color="#2747d8"/></linearGradient></defs><path d="M18 1.5 C27.5 1.5 34.5 8.5 34.5 17.5 C34.5 26.5 27.5 33.5 18 33.5 C14 33.5 10 32 7 30 L1.5 34 L3 26.5 C2 24 1.5 21 1.5 17.5 C1.5 8.5 8.5 1.5 18 1.5 Z" fill="#fff" stroke="url(#bg1)" stroke-width="1.6"/><path d="M13 7 L16.5 8.2 V21 L22.5 17.8 L19.5 16.3 L18.3 13.2 L25.5 16 Q27 17 26.5 19 L17 25.5 Q14.5 27 13 25 Z" fill="url(#bg2)"/></svg>
    <svg class="sic" style="top:57px" width="24" height="24" viewBox="0 0 24 24"><circle cx="10" cy="10" r="6.8" fill="#e8eef8" stroke="#4a4a4a" stroke-width="1.8"/><path d="M9 6 Q6.5 6.5 6 9" stroke="#fff" stroke-width="1.4" fill="none"/><path d="M15 15 L20.5 20.5" stroke="#c23be0" stroke-width="3.2" stroke-linecap="round"/></svg>
    <svg class="sic" style="top:104px" width="24" height="24" viewBox="0 0 24 24"><defs><linearGradient id="tg" x1="0" y1="1" x2="1" y2="0"><stop offset="0" stop-color="#3a5ae8"/><stop offset="1" stop-color="#5a7cf0"/></linearGradient></defs><path d="M3.5 13 L12.5 4 Q13.5 3 15 3 H20 Q21 3 21 4 V9 Q21 10.5 20 11.5 L11 20.5 Q10 21.5 9 20.5 L3.5 15 Q2.5 14 3.5 13 Z" fill="url(#tg)"/><circle cx="17" cy="7" r="1.8" fill="#f5d530"/></svg>
    <svg class="sic" style="top:152px" width="24" height="24" viewBox="0 0 24 24"><path d="M8.5 7 V4.5 Q8.5 3.5 9.5 3.5 H14.5 Q15.5 3.5 15.5 4.5 V7" fill="none" stroke="#666" stroke-width="1.4"/><rect x="2" y="7" width="20" height="13" rx="2" fill="#d9541e"/><rect x="2" y="7" width="20" height="5" rx="1.5" fill="#e8733a"/><rect x="10" y="11" width="4" height="3" fill="#bbb"/></svg>
    <svg class="sic" style="top:198px" width="24" height="24" viewBox="0 0 24 24"><path d="M13 3 H15 V4.5 H16.5 V3 H18.5 V4.5 H20 V3 H22 V7 L20.5 8.5 V15 L22 16.5 V19 H13 V16.5 L14.5 15 V8.5 L13 7 Z" fill="#b53cf0"/><circle cx="8.5" cy="10" r="2.8" fill="#666"/><path d="M6.5 12.5 H10.5 L11 17 L13 19 V21.5 H4 V19 L6 17 Z" fill="#4a4a4a"/></svg>
    <svg class="sic" style="top:244px" width="24" height="24" viewBox="0 0 24 24"><defs><linearGradient id="mg" x1="0" y1="0" x2="1" y2="1"><stop offset="0" stop-color="#1c6fe0"/><stop offset=".5" stop-color="#8a4cdc"/><stop offset="1" stop-color="#d24fbb"/></linearGradient></defs><path d="M12 2 L21 7 V17 L12 22 L3 17 V7 Z" fill="url(#mg)"/><path d="M12 8 L16 10.3 V14.3 L12 16.5 L8 14.3 V10.3 Z" fill="#f7f7f9"/></svg>
    <svg class="sic" style="top:291px" width="24" height="24" viewBox="0 0 24 24"><rect x="7" y="4" width="15" height="16" rx="1.5" fill="#28a8ea"/><path d="M7 11 L14.5 15.5 L22 11 V20 H7 Z" fill="#0a64c8"/><rect x="2" y="6.5" width="11" height="11" rx="1.3" fill="#0f6cc4"/><ellipse cx="7.5" cy="12" rx="3" ry="3.4" fill="none" stroke="#fff" stroke-width="1.6"/></svg>
    <svg class="sic" style="top:338px" width="24" height="24" viewBox="0 0 24 24"><rect x="3" y="2" width="16" height="16" rx="3" fill="#a659e8"/><circle cx="8" cy="7" r="2" fill="#ffd24a"/><path d="M3 14 Q8 10 12 13 L19 9 V15 Q19 18 16 18 H6 Q3 18 3 15 Z" fill="#2ea85a"/><path d="M9 21 L21 8" stroke="#3f73e8" stroke-width="2.6" stroke-linecap="round"/><path d="M4 21.5 Q7 19 9 21" stroke="#e0b020" stroke-width="2" fill="none"/></svg>
    <svg class="sic" style="top:385px" width="24" height="24" viewBox="0 0 24 24"><path d="M1.5 9 L22.5 4 L11 13 Z" fill="#3fa3ea"/><path d="M11 13 L22.5 4 L15.5 21 Z" fill="#2578d8"/><path d="M1.5 9 L11 13 L9 18 Z" fill="#f2b93a"/></svg>
    <svg class="sic" style="top:432px" width="24" height="24" viewBox="0 0 24 24"><rect x="10.3" y="15" width="3.4" height="7" fill="#d98a1a"/><path d="M12 2 Q17 2 19 7 Q21.5 8.5 21 12 Q20.5 16.5 16 16.5 H8 Q3.5 16.5 3 12 Q2.5 8.5 5 7 Q7 2 12 2 Z" fill="#1f8a3a"/><path d="M12 6 L14 8 L12 10 L10 8 Z" fill="#f5c82a"/></svg>
    <svg class="sic" style="top:482px" width="24" height="24" viewBox="0 0 24 24"><path d="M12 5 V19 M5 12 H19" stroke="#222" stroke-width="1.3"/></svg>
    <div class="a" style="left:15px;top:657px;width:33px;height:1px;background:#d6d6d8"></div>
    <svg class="sic" style="top:671px" width="24" height="24" viewBox="0 0 24 24"><rect x="3.5" y="5.5" width="17" height="13" rx="2.5" fill="none" stroke="#222" stroke-width="1.4"/><path d="M14.5 5.5 V18.5" stroke="#222" stroke-width="1.4"/></svg>
    <svg class="sic" style="top:718px" width="24" height="24" viewBox="0 0 24 24"><path d="M10.3 2.5 H13.7 L14.3 5.1 L16.6 6.4 L19.1 5.6 L20.8 8.5 L18.8 10.3 V13.7 L20.8 15.5 L19.1 18.4 L16.6 17.6 L14.3 18.9 L13.7 21.5 H10.3 L9.7 18.9 L7.4 17.6 L4.9 18.4 L3.2 15.5 L5.2 13.7 V10.3 L3.2 8.5 L4.9 5.6 L7.4 6.4 L9.7 5.1 Z" fill="none" stroke="#222" stroke-width="1.3" stroke-linejoin="round"/><circle cx="12" cy="12" r="3" fill="none" stroke="#222" stroke-width="1.3"/></svg>
  </div>
</div>

<svg style="left:676px;top:498px" width="15" height="21" viewBox="0 0 15 21"><path d="M0.6 0.6 V17.2 L4.6 13.4 L7.2 19.4 L9.6 18.4 L7.1 12.6 L12.9 12.6 Z" fill="#fff" stroke="#1a1a1a" stroke-width="1.1" stroke-linejoin="round"/></svg>
<!-- zoom panel -->
<div class="a" style="left:1548px;top:107px;width:168px;height:98px;background:linear-gradient(180deg,#e8f49a 0%,#cfe870 30%,#86d820 45%,#86d820 60%,#d8ee80 80%,#eef6a8 100%)"></div>
<div class="tile" style="left:1552px;top:111px"><div class="a" style="left:0;top:0;width:160px;height:90px;background:radial-gradient(ellipse at 45% 35%,#3f6cc8 0%,#2552b0 45%,#1c409a 100%)"></div>
<div class="t" style="left:19px;top:29px;font-size:20px;font-weight:bold;color:#d8e4f4;letter-spacing:-1.5px">KIEP</div>
<div class="a" style="left:23px;top:31px;width:10px;height:3px;background:#e03030;transform:rotate(-30deg)"></div>
<div class="t" style="left:100px;top:30px;font-size:11px;font-weight:bold;color:#e0e8f8;letter-spacing:-.8px">정책연구원</div>
<div class="a" style="left:75px;top:43px;width:80px;height:3px;background:linear-gradient(90deg,transparent,rgba(220,230,250,.6) 30%,rgba(220,230,250,.5))"></div>
<div class="a" style="left:30px;top:56px;width:104px;height:40px;border-radius:38px 38px 0 0;background:linear-gradient(180deg,#cfdde2,#b8c8d0)"></div>
<div class="a" style="left:72px;top:46px;width:22px;height:14px;background:#b88068;border-radius:0 0 10px 10px"></div>
<div class="a" style="left:63px;top:10px;width:40px;height:45px;border-radius:18px 18px 20px 20px;background:linear-gradient(180deg,#a87060 0%,#c89478 35%,#c08870 70%,#a87060 100%)"></div>
<div class="a" style="left:57px;top:-3px;width:51px;height:32px;border-radius:25px 25px 12px 12px;background:#18181c"></div>
<div class="a" style="left:65px;top:13px;width:36px;height:10px;border-radius:10px 10px 0 0;background:#b07868"></div>
<div class="a" style="left:65px;top:24px;width:16px;height:9px;border-radius:5px;border:1.5px solid #3a2418;background:#a8b878"></div>
<div class="a" style="left:83px;top:24px;width:16px;height:9px;border-radius:5px;border:1.5px solid #3a2418;background:rgba(190,140,110,.7)"></div>
<div class="a" style="left:75px;top:42px;width:15px;height:3px;border-radius:2px;background:#8a4a40"></div>
<div class="lbl" style="width:114px;padding-left:4px;">Heung Chong Kim</div></div>
<div class="tile" style="left:1718px;top:111px"><div class="a" style="left:40px;top:5px;width:80px;height:80px;background:#c13a0e;overflow:hidden"><div class="a" style="left:27px;top:18.5px;width:26px;height:26px;border-radius:50%;background:#edc1b1"></div><div class="a" style="left:14px;top:51px;width:52px;height:40px;border-radius:22px 22px 0 0;background:#edc1b1"></div></div><div class="lbl" style="width:160px;"><svg class="mic" width="14" height="14" viewBox="0 0 14 14"><rect x="5.2" y="1.5" width="4.6" height="7.5" rx="2.3" fill="#e25a5a"/><path d="M3.4 7.8 Q3.8 11 7.5 11 Q11.2 11 11.6 7.8 M7.5 11 V12.8 M5.2 12.8 H9.8" fill="none" stroke="#e25a5a" stroke-width="1"/><path d="M1.2 13.6 L12.8 1.6" stroke="#2e2e2e" stroke-width="2.2"/><path d="M1.2 13.6 L12.8 1.6" stroke="#e25a5a" stroke-width="1.1"/></svg>박혜연[ 국제대학원석...</div></div>
<div class="tile" style="left:1552px;top:207px"><div class="a" style="left:0;top:0;width:160px;height:90px;background:linear-gradient(90deg,#efe8e8 0%,#e8dcd4 35%,#a89080 55%,#b8b0a8 72%,#d0e0dc 85%,#a8c8c4 100%)"></div>
<div class="a" style="left:0;top:0;width:160px;height:90px;background:radial-gradient(ellipse at 15% 8%,rgba(255,255,255,.95) 0,rgba(255,255,255,.4) 18%,transparent 40%),radial-gradient(ellipse at 60% 40%,rgba(110,80,60,.55) 0,rgba(110,80,60,.25) 25%,transparent 45%),linear-gradient(180deg,transparent 50%,rgba(150,130,100,.25) 80%,rgba(80,90,80,.3) 100%)"></div>
<div class="a" style="left:70px;top:63px;width:28px;height:30px;border-radius:14px 14px 6px 6px;background:#1e1e22"></div>
<div class="a" style="left:74px;top:72px;width:20px;height:20px;border-radius:8px 8px 9px 9px;background:#e8cfc2"></div>
<div class="a" style="left:73px;top:70px;width:22px;height:5px;border-radius:6px 6px 0 0;background:#222"></div><div class="lbl" style="width:64px;"><svg class="mic" width="14" height="14" viewBox="0 0 14 14"><rect x="5.2" y="1.5" width="4.6" height="7.5" rx="2.3" fill="#e25a5a"/><path d="M3.4 7.8 Q3.8 11 7.5 11 Q11.2 11 11.6 7.8 M7.5 11 V12.8 M5.2 12.8 H9.8" fill="none" stroke="#e25a5a" stroke-width="1"/><path d="M1.2 13.6 L12.8 1.6" stroke="#2e2e2e" stroke-width="2.2"/><path d="M1.2 13.6 L12.8 1.6" stroke="#e25a5a" stroke-width="1.1"/></svg>김민경</div></div>
<div class="tile" style="left:1718px;top:207px"><div class="a" style="left:0;top:0;width:160px;height:90px;background:#000"></div>
<div class="a" style="left:56px;top:52px;width:48px;height:45px;border-radius:24px 24px 10px 10px;background:#6a5a52"></div>
<div class="a" style="left:64px;top:66px;width:32px;height:28px;border-radius:10px 10px 12px 12px;background:#e8d0c0"></div>
<div class="a" style="left:62px;top:60px;width:36px;height:10px;border-radius:14px 14px 4px 4px;background:#5e4e46"></div>
<div class="a" style="left:66px;top:74px;width:12px;height:6px;border-radius:3px;border:1px solid #8a7a70"></div>
<div class="a" style="left:82px;top:74px;width:12px;height:6px;border-radius:3px;border:1px solid #8a7a70"></div><div class="lbl" style="width:64px;"><svg class="mic" width="14" height="14" viewBox="0 0 14 14"><rect x="5.2" y="1.5" width="4.6" height="7.5" rx="2.3" fill="#e25a5a"/><path d="M3.4 7.8 Q3.8 11 7.5 11 Q11.2 11 11.6 7.8 M7.5 11 V12.8 M5.2 12.8 H9.8" fill="none" stroke="#e25a5a" stroke-width="1"/><path d="M1.2 13.6 L12.8 1.6" stroke="#2e2e2e" stroke-width="2.2"/><path d="M1.2 13.6 L12.8 1.6" stroke="#e25a5a" stroke-width="1.1"/></svg>이채현</div></div>
<div class="tile" style="left:1552px;top:303px"><div class="a" style="left:0;top:0;width:160px;height:90px;background:linear-gradient(90deg,#d4d4d2 0%,#e2e0de 30%,#dcdad8 70%,#d0cecc 100%)"></div>
<div class="a" style="left:71px;top:22px;width:27px;height:35px;background:linear-gradient(180deg,#3a3020 0%,#7a5a30 40%,#a05030 60%,#2a2820 100%)"></div>
<div class="a" style="left:99px;top:15px;width:17px;height:23px;background:#2a3a30"></div>
<div class="a" style="left:99px;top:39px;width:17px;height:12px;background:#8a7070"></div>
<div class="a" style="left:142px;top:12px;width:18px;height:70px;background:#f2f2f2"></div>
<div class="a" style="left:109px;top:56px;width:14px;height:8px;border-radius:50%;background:#e8e8e8"></div>
<div class="a" style="left:120px;top:60px;width:10px;height:2px;background:#ccc;transform:rotate(40deg)"></div>
<div class="a" style="left:67px;top:53px;width:36px;height:42px;border-radius:18px 18px 6px 6px;background:#1e1e22"></div>
<div class="a" style="left:74px;top:62px;width:22px;height:28px;border-radius:9px 9px 11px 11px;background:#e4cabc"></div><div class="lbl" style="width:160px;"><svg class="mic" width="14" height="14" viewBox="0 0 14 14"><rect x="5.2" y="1.5" width="4.6" height="7.5" rx="2.3" fill="#e25a5a"/><path d="M3.4 7.8 Q3.8 11 7.5 11 Q11.2 11 11.6 7.8 M7.5 11 V12.8 M5.2 12.8 H9.8" fill="none" stroke="#e25a5a" stroke-width="1"/><path d="M1.2 13.6 L12.8 1.6" stroke="#2e2e2e" stroke-width="2.2"/><path d="M1.2 13.6 L12.8 1.6" stroke="#e25a5a" stroke-width="1.1"/></svg>김현지[ 학부재학 / 국...</div></div>
<div class="tile" style="left:1718px;top:303px"><div class="a" style="left:0;top:0;width:160px;height:90px;background:linear-gradient(90deg,#d8d4d0 0%,#cac6c2 15%,#bcb8b4 40%,#d4d0cc 60%,#dcd8d4 100%)"></div>
<div class="a" style="left:8px;top:30px;width:80px;height:45px;background:repeating-linear-gradient(90deg,rgba(160,155,150,.18) 0 6px,rgba(220,215,210,.1) 6px 12px);filter:blur(1px)"></div>
<div class="a" style="left:0;top:0;width:160px;height:90px;background:linear-gradient(180deg,rgba(255,255,255,.35),transparent 30%,transparent 75%,rgba(60,50,45,.25))"></div>
<div class="a" style="left:70px;top:62px;width:28px;height:32px;border-radius:14px 14px 0 0;background:#4a3a32"></div>
<div class="a" style="left:92px;top:66px;width:26px;height:28px;border-radius:13px 13px 0 0;background:#3e322c"></div><div class="lbl" style="width:69px;"><svg class="mic" width="14" height="14" viewBox="0 0 14 14"><rect x="5.2" y="1.5" width="4.6" height="7.5" rx="2.3" fill="#e25a5a"/><path d="M3.4 7.8 Q3.8 11 7.5 11 Q11.2 11 11.6 7.8 M7.5 11 V12.8 M5.2 12.8 H9.8" fill="none" stroke="#e25a5a" stroke-width="1"/><path d="M1.2 13.6 L12.8 1.6" stroke="#2e2e2e" stroke-width="2.2"/><path d="M1.2 13.6 L12.8 1.6" stroke="#e25a5a" stroke-width="1.1"/></svg>한지원 .</div></div>
<div class="tile" style="left:1552px;top:399px"><div class="a" style="left:0;top:0;width:160px;height:90px;background:linear-gradient(180deg,#dedad4 0%,#d4d0c8 40%,#bab6ae 65%,#e8e6e2 72%,#c0bcb4 100%)"></div>
<div class="a" style="left:0;top:0;width:22px;height:90px;background:linear-gradient(90deg,rgba(255,255,255,.5),transparent)"></div>
<div class="a" style="left:60px;top:72px;width:40px;height:25px;border-radius:20px 20px 0 0;background:#4a3a32"></div><div class="lbl" style="width:160px;"><svg class="mic" width="14" height="14" viewBox="0 0 14 14"><rect x="5.2" y="1.5" width="4.6" height="7.5" rx="2.3" fill="#e25a5a"/><path d="M3.4 7.8 Q3.8 11 7.5 11 Q11.2 11 11.6 7.8 M7.5 11 V12.8 M5.2 12.8 H9.8" fill="none" stroke="#e25a5a" stroke-width="1"/><path d="M1.2 13.6 L12.8 1.6" stroke="#2e2e2e" stroke-width="2.2"/><path d="M1.2 13.6 L12.8 1.6" stroke="#e25a5a" stroke-width="1.1"/></svg>방지원[ 학부재학 / 사...</div></div>
<div class="tile" style="left:1718px;top:399px"><div class="a" style="left:0;top:0;width:160px;height:90px;background:linear-gradient(90deg,#6c9cc0 0%,#8aa8bc 25%,#a8a8a0 50%,#8a8880 75%,#5a5854 100%)"></div>
<div class="a" style="left:0;top:0;width:160px;height:90px;background:linear-gradient(180deg,rgba(255,255,255,.25) 0%,transparent 40%,rgba(20,25,20,.55) 60%,rgba(10,12,10,.7) 100%)"></div>
<div class="a" style="left:40px;top:50px;width:30px;height:40px;background:rgba(20,40,30,.5)"></div><div class="lbl" style="width:108px;"><svg class="mic" width="14" height="14" viewBox="0 0 14 14"><rect x="5.2" y="1.5" width="4.6" height="7.5" rx="2.3" fill="#e25a5a"/><path d="M3.4 7.8 Q3.8 11 7.5 11 Q11.2 11 11.6 7.8 M7.5 11 V12.8 M5.2 12.8 H9.8" fill="none" stroke="#e25a5a" stroke-width="1"/><path d="M1.2 13.6 L12.8 1.6" stroke="#2e2e2e" stroke-width="2.2"/><path d="M1.2 13.6 L12.8 1.6" stroke="#e25a5a" stroke-width="1.1"/></svg>Rachel Ballard</div></div>
<div class="tile" style="left:1552px;top:495px"><div class="a" style="left:0;top:0;width:160px;height:90px;background:linear-gradient(90deg,#f4f0ea 0%,#e8e4de 12%,#c85a28 14%,#b04a20 26%,#e0dcdc 30%,#dcd8e0 60%,#e6e2ea 100%)"></div>
<div class="a" style="left:58px;top:46px;width:84px;height:50px;border-radius:20px 20px 0 0;background:#9a3030"></div>
<div class="a" style="left:64px;top:8px;width:70px;height:90px;border-radius:34px 34px 14px 14px;background:#3a2020"></div>
<div class="a" style="left:80px;top:20px;width:38px;height:44px;border-radius:16px 16px 19px 19px;background:linear-gradient(180deg,#e8c4b4,#d8aa98)"></div>
<div class="a" style="left:82px;top:35px;width:15px;height:9px;border-radius:50%;border:1px solid #555"></div>
<div class="a" style="left:100px;top:35px;width:15px;height:9px;border-radius:50%;border:1px solid #555"></div>
<div class="a" style="left:90px;top:52px;width:14px;height:2px;border-radius:1px;background:#b07070"></div><div class="lbl" style="width:128px;"><svg class="mic" width="14" height="14" viewBox="0 0 14 14"><rect x="5.2" y="1.5" width="4.6" height="7.5" rx="2.3" fill="#e25a5a"/><path d="M3.4 7.8 Q3.8 11 7.5 11 Q11.2 11 11.6 7.8 M7.5 11 V12.8 M5.2 12.8 H9.8" fill="none" stroke="#e25a5a" stroke-width="1"/><path d="M1.2 13.6 L12.8 1.6" stroke="#2e2e2e" stroke-width="2.2"/><path d="M1.2 13.6 L12.8 1.6" stroke="#e25a5a" stroke-width="1.1"/></svg><span style="letter-spacing:-.6px">KIM YELYZAVETA .</span></div></div>
<div class="tile" style="left:1718px;top:495px"><div class="a" style="left:0;top:0;width:160px;height:90px;background:linear-gradient(180deg,#9a9890 0%,#c8c6c0 15%,#d4d2cc 50%,#c4c2bc 85%,#a8a6a0 100%)"></div>
<div class="a" style="left:0;top:0;width:160px;height:90px;background:linear-gradient(90deg,rgba(80,80,70,.25),transparent 20%,transparent 80%,rgba(80,80,70,.2))"></div>
<div class="a" style="left:70px;top:80px;width:30px;height:14px;border-radius:15px 15px 0 0;background:#2a2826"></div><div class="lbl" style="width:71px;"><svg class="mic" width="14" height="14" viewBox="0 0 14 14"><rect x="5.2" y="1.5" width="4.6" height="7.5" rx="2.3" fill="#e25a5a"/><path d="M3.4 7.8 Q3.8 11 7.5 11 Q11.2 11 11.6 7.8 M7.5 11 V12.8 M5.2 12.8 H9.8" fill="none" stroke="#e25a5a" stroke-width="1"/><path d="M1.2 13.6 L12.8 1.6" stroke="#2e2e2e" stroke-width="2.2"/><path d="M1.2 13.6 L12.8 1.6" stroke="#e25a5a" stroke-width="1.1"/></svg>정서현 .</div></div>
<div class="tile" style="left:1552px;top:591px"><div class="a" style="left:40px;top:5px;width:80px;height:80px;background:#00594a;overflow:hidden"><div class="a" style="left:27px;top:18.5px;width:26px;height:26px;border-radius:50%;background:#b2d2ce"></div><div class="a" style="left:14px;top:51px;width:52px;height:40px;border-radius:22px 22px 0 0;background:#b2d2ce"></div></div><div class="lbl" style="width:64px;"><svg class="mic" width="14" height="14" viewBox="0 0 14 14"><rect x="5.2" y="1.5" width="4.6" height="7.5" rx="2.3" fill="#e25a5a"/><path d="M3.4 7.8 Q3.8 11 7.5 11 Q11.2 11 11.6 7.8 M7.5 11 V12.8 M5.2 12.8 H9.8" fill="none" stroke="#e25a5a" stroke-width="1"/><path d="M1.2 13.6 L12.8 1.6" stroke="#2e2e2e" stroke-width="2.2"/><path d="M1.2 13.6 L12.8 1.6" stroke="#e25a5a" stroke-width="1.1"/></svg>조성우</div></div>
<div class="tile" style="left:1718px;top:591px"><div class="cname">김이재 .</div><div class="lbl" style="width:71px;"><svg class="mic" width="14" height="14" viewBox="0 0 14 14"><rect x="5.2" y="1.5" width="4.6" height="7.5" rx="2.3" fill="#e25a5a"/><path d="M3.4 7.8 Q3.8 11 7.5 11 Q11.2 11 11.6 7.8 M7.5 11 V12.8 M5.2 12.8 H9.8" fill="none" stroke="#e25a5a" stroke-width="1"/><path d="M1.2 13.6 L12.8 1.6" stroke="#2e2e2e" stroke-width="2.2"/><path d="M1.2 13.6 L12.8 1.6" stroke="#e25a5a" stroke-width="1.1"/></svg>김이재 .</div></div>
<div class="tile" style="left:1552px;top:687px"><div class="a" style="left:40px;top:5px;width:80px;height:80px;background:#c13a0e;overflow:hidden"><div class="a" style="left:27px;top:18.5px;width:26px;height:26px;border-radius:50%;background:#edc1b1"></div><div class="a" style="left:14px;top:51px;width:52px;height:40px;border-radius:22px 22px 0 0;background:#edc1b1"></div></div><div class="lbl" style="width:71px;"><svg class="mic" width="14" height="14" viewBox="0 0 14 14"><rect x="5.2" y="1.5" width="4.6" height="7.5" rx="2.3" fill="#e25a5a"/><path d="M3.4 7.8 Q3.8 11 7.5 11 Q11.2 11 11.6 7.8 M7.5 11 V12.8 M5.2 12.8 H9.8" fill="none" stroke="#e25a5a" stroke-width="1"/><path d="M1.2 13.6 L12.8 1.6" stroke="#2e2e2e" stroke-width="2.2"/><path d="M1.2 13.6 L12.8 1.6" stroke="#e25a5a" stroke-width="1.1"/></svg>표정우 .</div></div>
<div class="tile" style="left:1718px;top:687px"><div class="cname">서지운</div><div class="lbl" style="width:64px;"><svg class="mic" width="14" height="14" viewBox="0 0 14 14"><rect x="5.2" y="1.5" width="4.6" height="7.5" rx="2.3" fill="#e25a5a"/><path d="M3.4 7.8 Q3.8 11 7.5 11 Q11.2 11 11.6 7.8 M7.5 11 V12.8 M5.2 12.8 H9.8" fill="none" stroke="#e25a5a" stroke-width="1"/><path d="M1.2 13.6 L12.8 1.6" stroke="#2e2e2e" stroke-width="2.2"/><path d="M1.2 13.6 L12.8 1.6" stroke="#e25a5a" stroke-width="1.1"/></svg>서지운</div></div>
<div class="tile" style="left:1552px;top:783px"><div class="cname">Munisa&nbsp; Mamadi...</div><div class="lbl" style="width:139px;"><svg class="mic" width="14" height="14" viewBox="0 0 14 14"><rect x="5.2" y="1.5" width="4.6" height="7.5" rx="2.3" fill="#e25a5a"/><path d="M3.4 7.8 Q3.8 11 7.5 11 Q11.2 11 11.6 7.8 M7.5 11 V12.8 M5.2 12.8 H9.8" fill="none" stroke="#e25a5a" stroke-width="1"/><path d="M1.2 13.6 L12.8 1.6" stroke="#2e2e2e" stroke-width="2.2"/><path d="M1.2 13.6 L12.8 1.6" stroke="#e25a5a" stroke-width="1.1"/></svg>Munisa Mamadieva</div></div>
<div class="tile" style="left:1718px;top:783px"><div class="cname">양수진 .</div><div class="lbl" style="width:71px;"><svg class="mic" width="14" height="14" viewBox="0 0 14 14"><rect x="5.2" y="1.5" width="4.6" height="7.5" rx="2.3" fill="#e25a5a"/><path d="M3.4 7.8 Q3.8 11 7.5 11 Q11.2 11 11.6 7.8 M7.5 11 V12.8 M5.2 12.8 H9.8" fill="none" stroke="#e25a5a" stroke-width="1"/><path d="M1.2 13.6 L12.8 1.6" stroke="#2e2e2e" stroke-width="2.2"/><path d="M1.2 13.6 L12.8 1.6" stroke="#e25a5a" stroke-width="1.1"/></svg>양수진 .</div></div>
<div class="tile" style="left:1552px;top:879px"><div class="cname">이다경 .</div><div class="lbl" style="width:71px;"><svg class="mic" width="14" height="14" viewBox="0 0 14 14"><rect x="5.2" y="1.5" width="4.6" height="7.5" rx="2.3" fill="#e25a5a"/><path d="M3.4 7.8 Q3.8 11 7.5 11 Q11.2 11 11.6 7.8 M7.5 11 V12.8 M5.2 12.8 H9.8" fill="none" stroke="#e25a5a" stroke-width="1"/><path d="M1.2 13.6 L12.8 1.6" stroke="#2e2e2e" stroke-width="2.2"/><path d="M1.2 13.6 L12.8 1.6" stroke="#e25a5a" stroke-width="1.1"/></svg>이다경 .</div></div>
<div class="tile" style="left:1718px;top:879px"><div class="cname">조성민 .</div><div class="lbl" style="width:71px;"><svg class="mic" width="14" height="14" viewBox="0 0 14 14"><rect x="5.2" y="1.5" width="4.6" height="7.5" rx="2.3" fill="#e25a5a"/><path d="M3.4 7.8 Q3.8 11 7.5 11 Q11.2 11 11.6 7.8 M7.5 11 V12.8 M5.2 12.8 H9.8" fill="none" stroke="#e25a5a" stroke-width="1"/><path d="M1.2 13.6 L12.8 1.6" stroke="#2e2e2e" stroke-width="2.2"/><path d="M1.2 13.6 L12.8 1.6" stroke="#e25a5a" stroke-width="1.1"/></svg>조성민 .</div></div>
<div class="a" style="left:18.5px;top:923px;width:39px;height:39px;border-radius:50%;background:#16191c;border:1px solid #2a2e32;overflow:hidden"><div class="a" style="left:0;top:0;width:39px;height:12px;background:#3b3e42"></div></div>
<svg style="left:29px;top:934px" width="18" height="18" viewBox="0 0 18 18"><path d="M2.5 15.5 L3.2 11.8 L12.5 2.5 Q13.5 1.5 14.5 2.5 L15.5 3.5 Q16.5 4.5 15.5 5.5 L6.2 14.8 Z M11 4 L14 7" fill="none" stroke="#2fd158" stroke-width="1.4" stroke-linejoin="round"/></svg>
</body></html>
